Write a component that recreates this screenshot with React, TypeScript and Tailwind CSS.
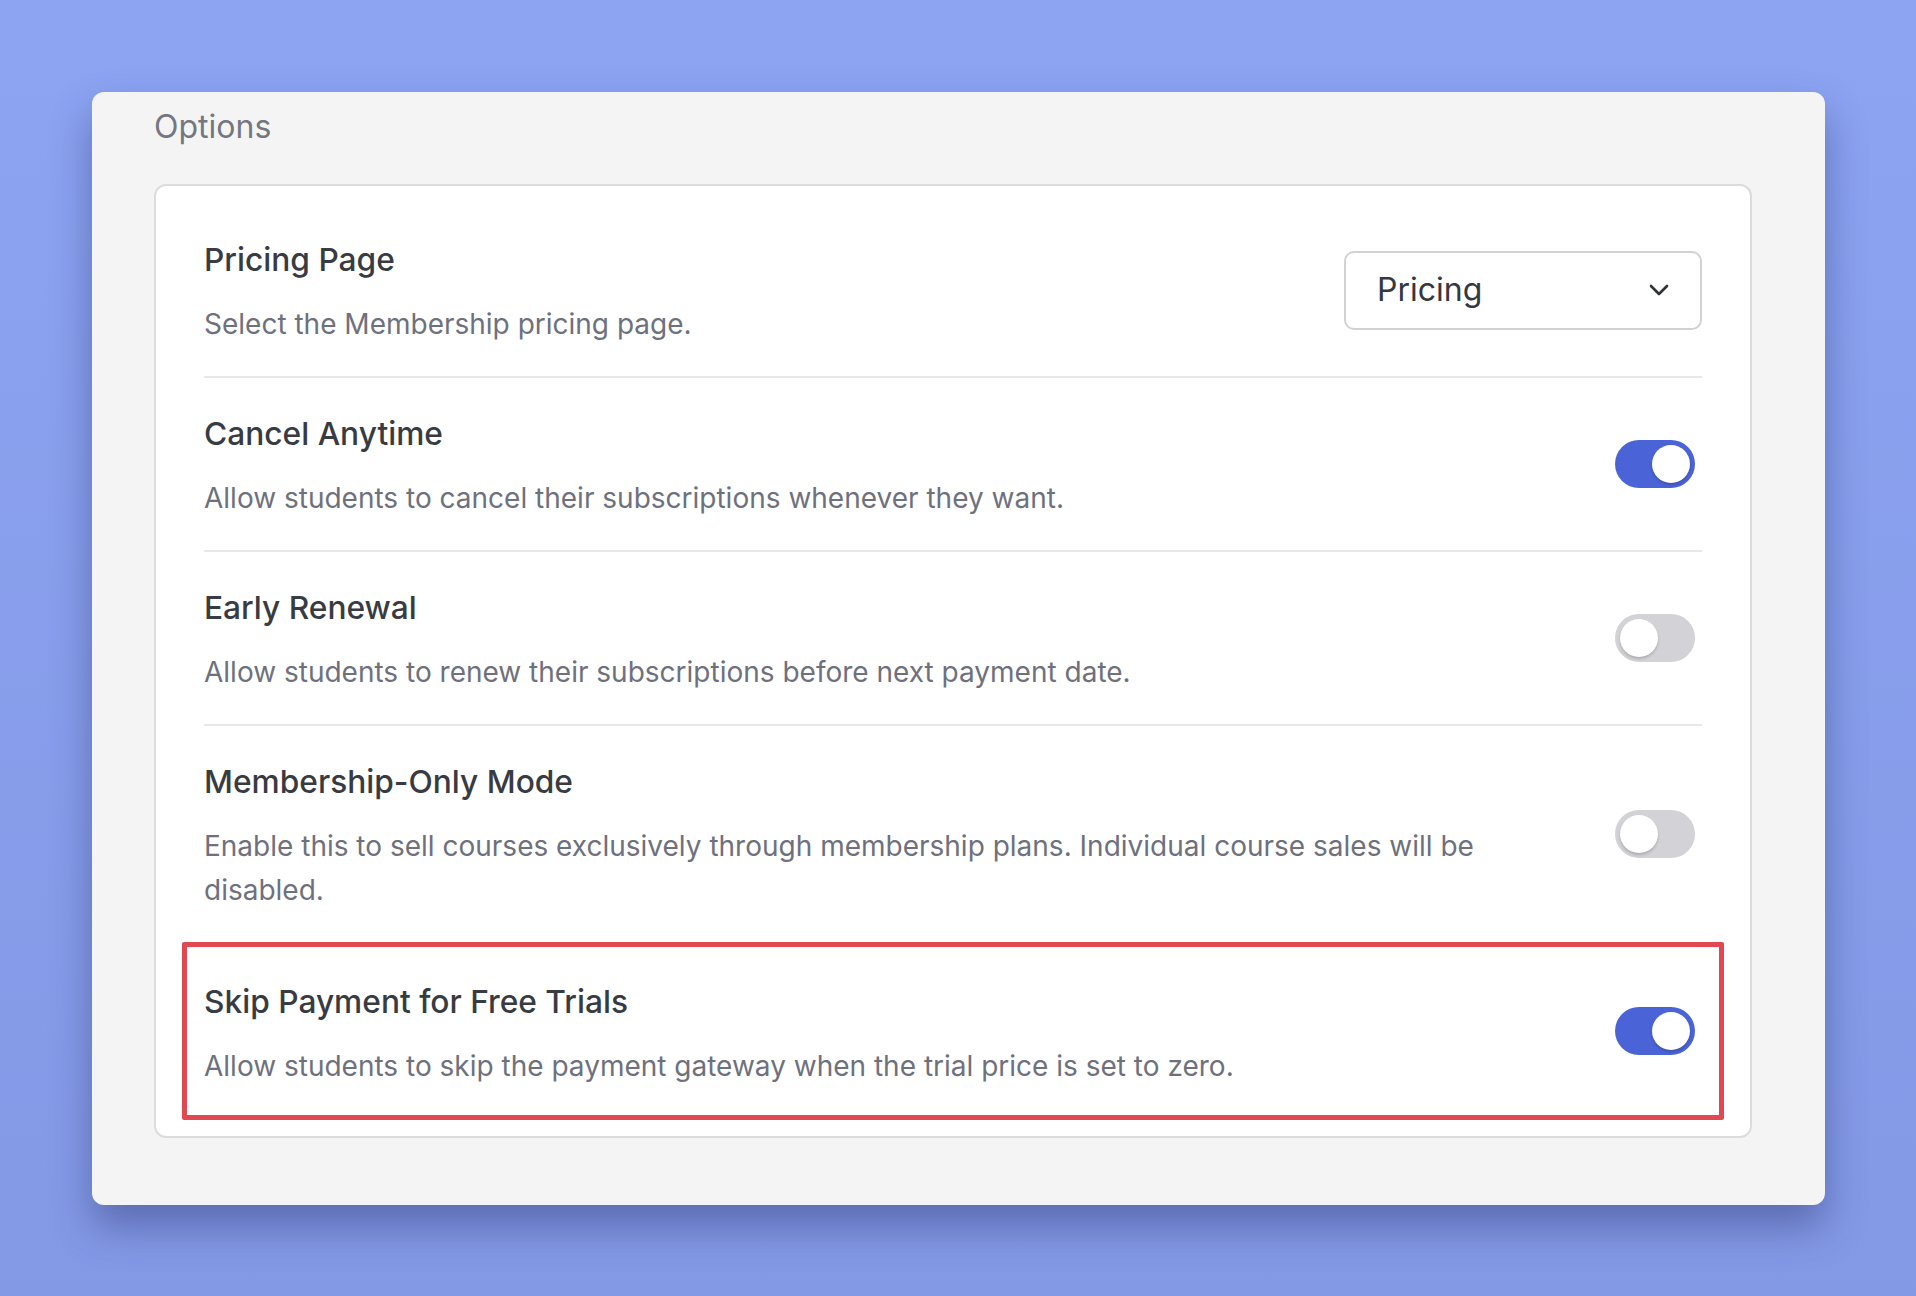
import React from 'react';

function Toggle({ on }: { on: boolean }) {
  return (
    <div
      className={`w-[80px] h-[48px] rounded-full p-[5px] flex items-center shrink-0 ${
        on ? 'bg-[#4a64d7] justify-end' : 'bg-[#d2d2d7] justify-start'
      }`}
    >
      <div className="w-[38px] h-[38px] rounded-full bg-white shadow-[0_2px_3px_rgba(0,0,0,0.18)]" />
    </div>
  );
}

function Row({ title, desc, right, last, highlight }: any) {
  return (
    <div className={`relative flex items-stretch justify-between gap-6 ${last ? '' : 'border-b-2 border-[#e8e8ea]'}`}>
      <div className={`flex-1 max-w-[1320px] pb-[30px] ${last ? 'pt-[41px]' : 'pt-[39px]'}`}>
        <p className="text-[31.7px] leading-[34px] font-medium text-[#383b42]">{title}</p>
        <p className="mt-[25px] text-[28px] leading-[44px] text-[#6e717d]">{desc}</p>
      </div>
      <div className="pr-[7px] flex items-center">{right}</div>
      {highlight && (
        <div className="absolute -left-[22px] -right-[22px] -top-[2px] -bottom-[2px] border-[5px] border-[#e1484f] rounded-[2px] pointer-events-none" />
      )}
    </div>
  );
}

export default function App() {
  const rows = [
    {
      title: 'Cancel Anytime',
      desc: 'Allow students to cancel their subscriptions whenever they want.',
      on: true,
    },
    {
      title: 'Early Renewal',
      desc: 'Allow students to renew their subscriptions before next payment date.',
      on: false,
    },
    {
      title: 'Membership-Only Mode',
      desc: 'Enable this to sell courses exclusively through membership plans. Individual course sales will be disabled.',
      on: false,
    },
  ];

  return (
    <div
      className="w-full h-[1296px] bg-gradient-to-b from-[#8ca4f2] to-[#8499e6] pt-[92px] pl-[92px]"
      style={{ fontFamily: 'Inter, "Noto Sans", sans-serif' }}
    >
      <div className="w-[1733px] h-[1113px] bg-[#f4f4f5] rounded-[12px] shadow-[0_22px_40px_rgba(40,50,110,0.45)] pt-[18px] pl-[62px] pr-[73px]">
        <h2 className="text-[32px] leading-[34px] text-[#74777f]">Options</h2>
        <div className="mt-[40px] bg-white border-2 border-[#dcdcdf] rounded-[12px] px-[48px] pt-[18px] pb-[18px]">
          <Row
            title="Pricing Page"
            desc="Select the Membership pricing page."
            right={
              <div className="w-[358px] h-[79px] -mr-[7px] rounded-[10px] border-2 border-[#d2d2d5] flex items-center justify-between pl-[31px] pr-[30px]">
                <span className="text-[32px] text-[#35383f]">Pricing</span>
                <svg width="22" height="14" viewBox="0 0 22 14" fill="none">
                  <path d="M3 3l8 8 8-8" stroke="#2f3238" strokeWidth="2.6" strokeLinecap="round" strokeLinejoin="round" />
                </svg>
              </div>
            }
          />
          {rows.map((r, i) => (
            <Row key={i} title={r.title} desc={r.desc} right={<Toggle on={r.on} />} />
          ))}
          <Row
            title="Skip Payment for Free Trials"
            desc="Allow students to skip the payment gateway when the trial price is set to zero."
            right={<Toggle on={true} />}
            last
            highlight
          />
        </div>
      </div>
    </div>
  );
}
